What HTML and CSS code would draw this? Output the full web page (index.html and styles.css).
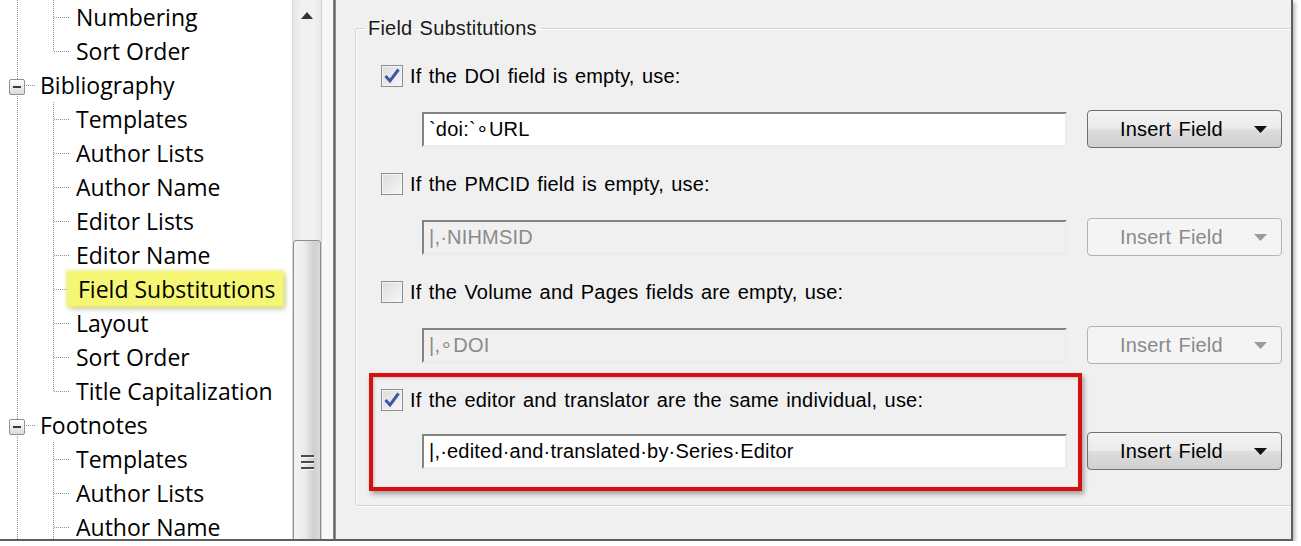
FILE: index.html
```html
<!DOCTYPE html>
<html lang="en">
<head>
  <meta charset="UTF-8" />
  <title>Style Editor - Field Substitutions</title>
  <link rel="stylesheet" href="styles.css">
</head>
<body>

  <div class="window">

    <div class="nav">
      <ul class="tree">
        <li>
          <ul class="children">
            <li class="leaf"><span class="label">Numbering</span></li>
            <li class="leaf last"><span class="label">Sort Order</span></li>
          </ul>
        </li>
        <li>
          <div class="row"><span class="expander"></span><span class="label">Bibliography</span></div>
          <ul class="children">
            <li class="leaf"><span class="label">Templates</span></li>
            <li class="leaf"><span class="label">Author Lists</span></li>
            <li class="leaf"><span class="label">Author Name</span></li>
            <li class="leaf"><span class="label">Editor Lists</span></li>
            <li class="leaf"><span class="label">Editor Name</span></li>
            <li class="leaf marked"><span class="label">Field Substitutions</span></li>
            <li class="leaf"><span class="label">Layout</span></li>
            <li class="leaf"><span class="label">Sort Order</span></li>
            <li class="leaf last"><span class="label">Title Capitalization</span></li>
          </ul>
        </li>
        <li>
          <div class="row"><span class="expander"></span><span class="label">Footnotes</span></div>
          <ul class="children">
            <li class="leaf"><span class="label">Templates</span></li>
            <li class="leaf"><span class="label">Author Lists</span></li>
            <li class="leaf"><span class="label">Author Name</span></li>
          </ul>
        </li>
      </ul>
    </div>

    <div class="scroll">
      <svg class="scroll-up" width="12" height="7" viewBox="0 0 12 7"><path d="M0 7 L6 0 L12 7 Z" fill="#333"/></svg>
      <div class="thumb">
        <span class="grip"></span>
        <span class="grip"></span>
        <span class="grip"></span>
      </div>
    </div>
    <div class="gutter"></div>
    <div class="splitter"></div>

    <div class="panel">
      <fieldset class="group">
        <legend>Field Substitutions</legend>
        <div class="subs">

          <div class="sub">
            <div class="check-line">
              <span class="check on"><svg width="18" height="18" viewBox="0 0 18 18"><path d="M2.5 9 L7 14 L15.5 2.5" fill="none" stroke="#3f56a8" stroke-width="3"/></svg></span>
              <span>If the DOI field is empty, use:</span>
            </div>
            <div class="field-line">
              <input class="field" type="text" value="`doi:`∘URL">
              <button class="insert">Insert Field <svg width="13" height="7" viewBox="0 0 13 7"><path d="M0 0 H13 L6.5 7 Z" fill="#111"/></svg></button>
            </div>
          </div>

          <div class="sub">
            <div class="check-line">
              <span class="check"></span>
              <span>If the PMCID field is empty, use:</span>
            </div>
            <div class="field-line">
              <input class="field" type="text" value="|,·NIHMSID" disabled>
              <button class="insert" disabled>Insert Field <svg width="13" height="7" viewBox="0 0 13 7"><path d="M0 0 H13 L6.5 7 Z" fill="#9a9a9a"/></svg></button>
            </div>
          </div>

          <div class="sub">
            <div class="check-line">
              <span class="check"></span>
              <span>If the Volume and Pages fields are empty, use:</span>
            </div>
            <div class="field-line">
              <input class="field" type="text" value="|,∘DOI" disabled>
              <button class="insert" disabled>Insert Field <svg width="13" height="7" viewBox="0 0 13 7"><path d="M0 0 H13 L6.5 7 Z" fill="#9a9a9a"/></svg></button>
            </div>
          </div>

          <div class="sub marked">
            <div class="check-line">
              <span class="check on"><svg width="18" height="18" viewBox="0 0 18 18"><path d="M2.5 9 L7 14 L15.5 2.5" fill="none" stroke="#3f56a8" stroke-width="3"/></svg></span>
              <span>If the editor and translator are the same individual, use:</span>
            </div>
            <div class="field-line">
              <input class="field" type="text" value="|,·edited·and·translated·by·Series·Editor">
              <button class="insert">Insert Field <svg width="13" height="7" viewBox="0 0 13 7"><path d="M0 0 H13 L6.5 7 Z" fill="#111"/></svg></button>
            </div>
          </div>

        </div>
      </fieldset>
    </div>

  </div>

</body>
</html>
```

FILE: styles.css
```css
body {
  margin: 0;
  background: #fff;
  font-family: "Liberation Sans", Arial, sans-serif;
  color: #000;
}

.window {
  display: flex;
  width: 1293px;
  height: 541px;
  box-sizing: border-box;
  border-right: 2px solid #5e5e5e;
  border-bottom: 2px solid #5e5e5e;
  box-shadow: 2px 2px 4px rgba(0, 0, 0, 0.3);
  overflow: hidden;
}

/* tree on the left */

.nav {
  flex: none;
  width: 292px;
  overflow: hidden;
  font-family: "Open Sans", sans-serif;
  font-size: 23px;
  background:
    repeating-linear-gradient(to bottom, #8f8f8f 0 1px, transparent 1px 2px) 17px 0 / 1px 100% no-repeat,
    #fff;
}

.tree, .children {
  list-style: none;
  margin: 0;
  padding: 0;
}

.children {
  padding-left: 53px;
}

.leaf {
  display: flex;
  align-items: center;
  height: 34px;
  padding-left: 23px;
  line-height: 24px;
  background:
    repeating-linear-gradient(to right, #8f8f8f 0 1px, transparent 1px 2px) 1px 17px / 16px 1px no-repeat,
    repeating-linear-gradient(to bottom, #8f8f8f 0 1px, transparent 1px 2px) 0 0 / 1px 100% no-repeat;
}

.leaf.last {
  background-size: 16px 1px, 1px 17px;
}

.leaf.marked .label {
  margin-left: -8px;
  padding: 5px 8px 5px 10px;
  background: #f6f675;
  box-shadow: 0 0 3px 2px rgba(238, 238, 110, 0.8), 2px 3px 5px rgba(0, 0, 0, 0.25);
}

.row {
  display: flex;
  align-items: center;
  height: 34px;
  line-height: 24px;
  background: repeating-linear-gradient(to right, #8f8f8f 0 1px, transparent 1px 2px) 26px 17px / 10px 1px no-repeat;
}

.expander {
  display: flex;
  align-items: center;
  justify-content: center;
  width: 16px;
  height: 16px;
  margin-left: 9px;
  margin-top: 3px;
  box-sizing: border-box;
  border: 1px solid #919191;
  border-radius: 2px;
  background: linear-gradient(#fff, #dcdcdc);
}

.expander::before {
  content: '';
  width: 8px;
  height: 2px;
  background: #3a3a3a;
}

.row .label {
  margin-left: 15px;
}

/* scrollbar and splitter */

.scroll {
  flex: none;
  display: flex;
  flex-direction: column;
  align-items: center;
  width: 30px;
  box-sizing: border-box;
  border-left: 1px solid #dadada;
  border-right: 1px solid #cfcfcf;
  background: linear-gradient(to right, #e6e6e6, #f1f1f1 30%, #f1f1f1 70%, #e9e9e9);
  overflow: hidden;
}

.scroll-up {
  flex: none;
  margin-top: 12px;
}

.thumb {
  flex: none;
  display: flex;
  flex-direction: column;
  align-items: center;
  gap: 3px;
  width: 28px;
  height: 330px;
  margin-top: 221px;
  padding-top: 214px;
  box-sizing: border-box;
  border: 1px solid #8e8e8e;
  border-radius: 3px;
  background: linear-gradient(to right, #f4f4f4, #ebebeb 40%, #cfcfcf 78%, #dadada);
}

.grip {
  width: 13px;
  height: 2px;
  background: #4a4a4a;
  border-bottom: 1px solid #f4f4f4;
}

.gutter {
  flex: none;
  width: 11px;
  background: #f8f8f8;
}

.splitter {
  flex: none;
  width: 3px;
  background: linear-gradient(to right, #9a9a9a, #666 40%, #6e6e6e 70%, #b0b0b0);
}

/* substitutions panel */

.panel {
  flex: 1;
  min-width: 0;
  padding: 17px 0 0 19px;
  background: #f0f0f0;
  font-size: 20px;
  letter-spacing: 0.2px;
  word-spacing: 1.5px;
  overflow: hidden;
}

.group {
  margin: 0 -30px 0 0;
  padding: 0 0 35px 0;
  border: 1px solid #d3d3d3;
  border-radius: 3px;
  box-shadow: 1px 1px 0 #fff, inset 1px 1px 0 #fff;
}

.group legend {
  margin-left: 8px;
  padding: 0 4px;
  line-height: 22px;
  color: #1b1b1b;
}

.subs {
  padding: 26px 0 0 25px;
}

.sub {
  margin-bottom: 25px;
}

.sub:last-child {
  margin-bottom: 0;
}

.check-line {
  display: flex;
  align-items: center;
  gap: 7px;
  height: 22px;
}

.check {
  display: flex;
  align-items: center;
  justify-content: center;
  width: 22px;
  height: 22px;
  box-sizing: border-box;
  border: 1px solid #8e8f8f;
  background: linear-gradient(135deg, #dcdcdc, #f7f7f7);
  box-shadow: inset 0 0 0 1px #f4f4f4;
}

.field-line {
  display: flex;
  align-items: center;
  gap: 20px;
  height: 38px;
  margin-top: 23px;
  padding-left: 41px;
}

.marked .field-line {
  margin-top: 21px;
}

.field {
  width: 645px;
  height: 35px;
  box-sizing: border-box;
  padding: 0 5px;
  border: 2px solid;
  border-color: #838383 #ececec #ececec #838383;
  background: #fff;
  font: inherit;
  letter-spacing: inherit;
  word-spacing: inherit;
  color: #000;
  outline: none;
}

.field:disabled {
  background: #f0f0f0;
  color: #8a8a8a;
}

.insert {
  display: flex;
  align-items: center;
  justify-content: space-between;
  width: 195px;
  height: 38px;
  padding: 0 14px 0 32px;
  border: 1px solid #707070;
  border-radius: 4px;
  background: linear-gradient(#f3f3f3, #ebebeb 48%, #dddddd 52%, #cfcfcf);
  font: inherit;
  letter-spacing: inherit;
  word-spacing: inherit;
  color: #000;
}

.insert:disabled {
  border-color: #b3b3b3;
  background: #f4f4f4;
  color: #8a8a8a;
}

/* red callout round the last option */

.sub.marked {
  position: relative;
}

.sub.marked::before {
  content: '';
  position: absolute;
  left: -12px;
  top: -16px;
  width: 713px;
  height: 118px;
  box-sizing: border-box;
  border: 4px solid #d80f0f;
  box-shadow: 2px 3px 5px rgba(0, 0, 0, 0.35), inset 1px 1px 3px rgba(0, 0, 0, 0.2);
  pointer-events: none;
}
```
